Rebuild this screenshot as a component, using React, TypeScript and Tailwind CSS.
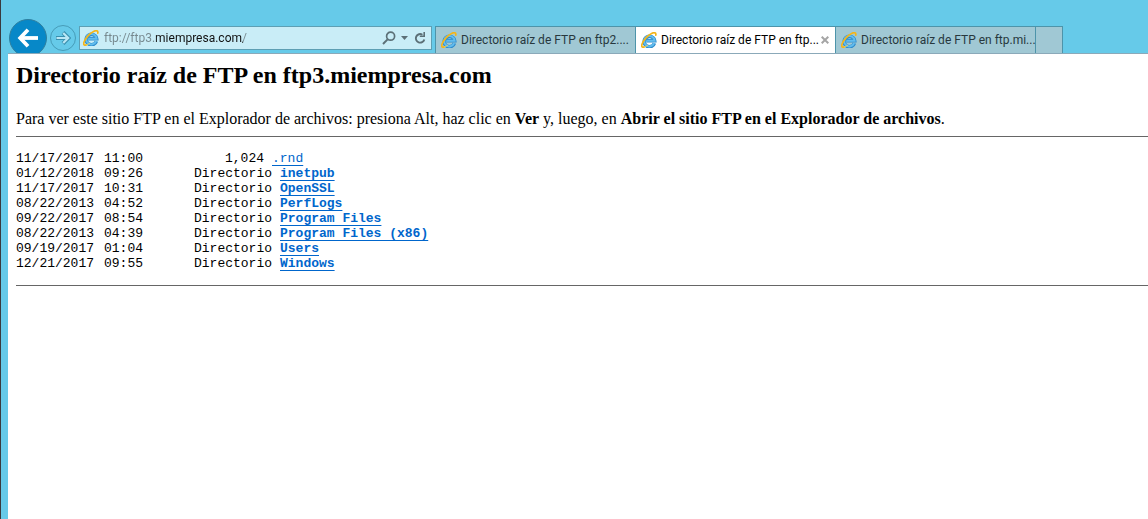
import React from "react";

type Entry = { date: string; time: string; size?: string; name: string };

const entries: Entry[] = [
  { date: "11/17/2017", time: "11:00", size: "1,024", name: ".rnd" },
  { date: "01/12/2018", time: "09:26", name: "inetpub" },
  { date: "11/17/2017", time: "10:31", name: "OpenSSL" },
  { date: "08/22/2013", time: "04:52", name: "PerfLogs" },
  { date: "09/22/2017", time: "08:54", name: "Program Files" },
  { date: "08/22/2013", time: "04:39", name: "Program Files (x86)" },
  { date: "09/19/2017", time: "01:04", name: "Users" },
  { date: "12/21/2017", time: "09:55", name: "Windows" },
];

const tabs = [
  { title: "Directorio raíz de FTP en ftp2....", active: false },
  { title: "Directorio raíz de FTP en ftp...", active: true },
  { title: "Directorio raíz de FTP en ftp.mi...", active: false },
];

function BrowserLogo() {
  return (
    <svg viewBox="0 0 16 16" className="h-4 w-4 shrink-0" fill="none" aria-hidden="true">
      <path d="M13.4 11.2A5.2 5.2 0 1 1 13.6 8.8H5.4" stroke="#2f8ccc" strokeWidth="3.6" />
      <path d="M13.2 11.2A5.2 5.2 0 1 1 13.6 8.8H5.4" stroke="#62bdee" strokeWidth="2" />
      <path
        d="M3.2 14.9C1.2 15.7.2 14.7 1 12.3 2.3 8.4 6.4 3.4 10.6 1.4 13.4.1 15.3.6 14.8 3.2"
        stroke="#f3b51b"
        strokeWidth="1.7"
        strokeLinecap="round"
      />
      <path d="M3.2 14.9C5 14.4 6 13.7 7 13" stroke="#f8d34c" strokeWidth="1" />
    </svg>
  );
}

function Toolbar() {
  return (
    <div className="flex w-[431px] shrink-0 items-start pl-2 pt-[19px]">
      <button
        type="button"
        aria-label="Atrás"
        className="flex h-[38px] w-[38px] shrink-0 items-center justify-center rounded-full border border-[#2f7f9f] bg-[#0788c8]"
      >
        <svg viewBox="0 0 22 20" className="h-5 w-[22px]" fill="none" stroke="#fff" aria-hidden="true">
          <path d="M21 10H4" strokeWidth="3.8" />
          <path d="M11 1.8L3.2 10l7.8 8.2" strokeWidth="3.8" />
        </svg>
      </button>
      <button
        type="button"
        aria-label="Adelante"
        className="ml-[3px] mt-1.5 flex h-[26px] w-[26px] shrink-0 items-center justify-center rounded-full border border-[#469cb8]"
      >
        <svg viewBox="0 0 16 16" className="h-4 w-4" fill="none" aria-hidden="true">
          <path d="M1 8h12M8 2.5L13.5 8 8 13.5" stroke="#398fae" strokeWidth="4" />
          <path d="M1.5 8h11M8.2 3L13.2 8l-5 5" stroke="#b9e7f5" strokeWidth="2.2" />
        </svg>
      </button>
      <form
        className="ml-[3px] mt-[7px] flex h-6 min-w-0 flex-1 items-center border border-[#5d9fb4] bg-[#c9edf7] pl-[3px] pr-0.5"
        onSubmit={(e) => e.preventDefault()}
      >
        <BrowserLogo />
        <input
          type="text"
          aria-label="Dirección"
          defaultValue="ftp://ftp3.miempresa.com/"
          className="ml-[5px] h-5 min-w-0 flex-1 bg-[linear-gradient(to_right,#76888e_0_52px,#111_52px_139px,#76888e_139px)] bg-clip-text text-xs text-transparent caret-black outline-none"
        />
        <button type="button" aria-label="Buscar" className="flex h-5 w-[17px] items-center justify-center">
          <svg viewBox="0 0 14 14" className="h-3.5 w-3.5" fill="none" stroke="#5c7077" aria-hidden="true">
            <circle cx="8.6" cy="5.2" r="4" strokeWidth="1.7" />
            <path d="M5.6 8.4L1 13" strokeWidth="2" />
          </svg>
        </button>
        <button type="button" aria-label="Mostrar direcciones" className="flex h-5 w-3.5 items-center justify-center">
          <svg viewBox="0 0 7 4" className="h-1 w-[7px]" aria-hidden="true">
            <path d="M0 0h7L3.5 4z" fill="#5c7077" />
          </svg>
        </button>
        <button type="button" aria-label="Actualizar" className="flex h-5 w-[18px] items-center justify-center">
          <svg viewBox="0 0 12 14" className="h-3.5 w-3" fill="none" stroke="#5c7077" aria-hidden="true">
            <path d="M8.4 3.7A4.3 4.3 0 1 0 10.3 8.4" strokeWidth="1.9" />
            <path d="M10.2 1v4.2H5.8" strokeWidth="1.6" />
          </svg>
        </button>
      </form>
    </div>
  );
}

function TabStrip() {
  return (
    <nav aria-label="Pestañas" className="ml-[3px] mt-[26px] flex min-w-0 items-stretch border-l border-t border-[#4d94aa]">
      {tabs.map((tab) => (
        <div
          key={tab.title}
          className={
            tab.active
              ? "flex w-[200px] items-center border-r border-[#4d94aa] bg-white pl-[5px] text-black"
              : "flex w-[200px] items-center border-r border-[#4d94aa] bg-[#a0c8d4] pl-[5px] text-[#27383e]"
          }
        >
          <button type="button" className="flex min-w-0 items-center gap-1 whitespace-nowrap text-xs">
            <BrowserLogo />
            {tab.title}
          </button>
          {tab.active && (
            <button type="button" aria-label="Cerrar pestaña" className="ml-auto mr-1.5 flex h-4 w-2 items-center">
              <svg viewBox="0 0 8 8" className="h-2 w-2" stroke="#a5a5a5" strokeWidth="2" aria-hidden="true">
                <path d="M.7.7l6.6 6.6M7.3.7L.7 7.3" />
              </svg>
            </button>
          )}
        </div>
      ))}
      <button type="button" aria-label="Nueva pestaña" className="w-[27px] border-r border-[#4d94aa] bg-[#a0c8d4]" />
    </nav>
  );
}

function Listing() {
  return (
    <table className="mt-3.5 border-collapse font-['Liberation_Mono',monospace] text-[13px] leading-[15px]">
      <tbody>
        {entries.map((entry) => (
          <tr key={entry.name}>
            <td className="w-[88px] p-0">{entry.date}</td>
            <td className="w-12 p-0">{entry.time}</td>
            <td className={entry.size ? "w-[120px] p-0 pr-2 text-right" : "w-[120px] p-0 text-right"}>
              {entry.size ?? "Directorio"}
            </td>
            <td className={entry.size ? "p-0" : "p-0 pl-2"}>
              <a
                href={"#" + encodeURIComponent(entry.name)}
                className={
                  entry.size
                    ? "text-[#0066cc] underline decoration-1 underline-offset-3"
                    : "font-bold text-[#0066cc] underline decoration-1 underline-offset-3"
                }
              >
                {entry.name}
              </a>
            </td>
          </tr>
        ))}
      </tbody>
    </table>
  );
}

export default function App() {
  return (
    <div className="flex min-h-screen flex-col border-l border-[#3a3a3e] bg-[#66cae9] font-[Roboto,sans-serif]">
      <header className="flex h-[53px] shrink-0 items-stretch overflow-hidden">
        <Toolbar />
        <TabStrip />
      </header>
      <main className="ml-[7px] flex-1 border-t border-[#8ba9b9] bg-white pl-2 font-['Liberation_Serif',serif] text-black">
        <h1 className="pt-[7px] text-2xl leading-7 font-bold">Directorio raíz de FTP en ftp3.miempresa.com</h1>
        <p className="mt-[21px] text-base leading-[18px]">
          Para ver este sitio FTP en el Explorador de archivos: presiona Alt, haz clic en <b>Ver</b> y, luego, en{" "}
          <b>Abrir el sitio FTP en el Explorador de archivos</b>.
        </p>
        <hr className="mt-2 border-t border-[#666]" />
        <Listing />
        <hr className="mt-3.5 border-t border-[#666]" />
      </main>
    </div>
  );
}
